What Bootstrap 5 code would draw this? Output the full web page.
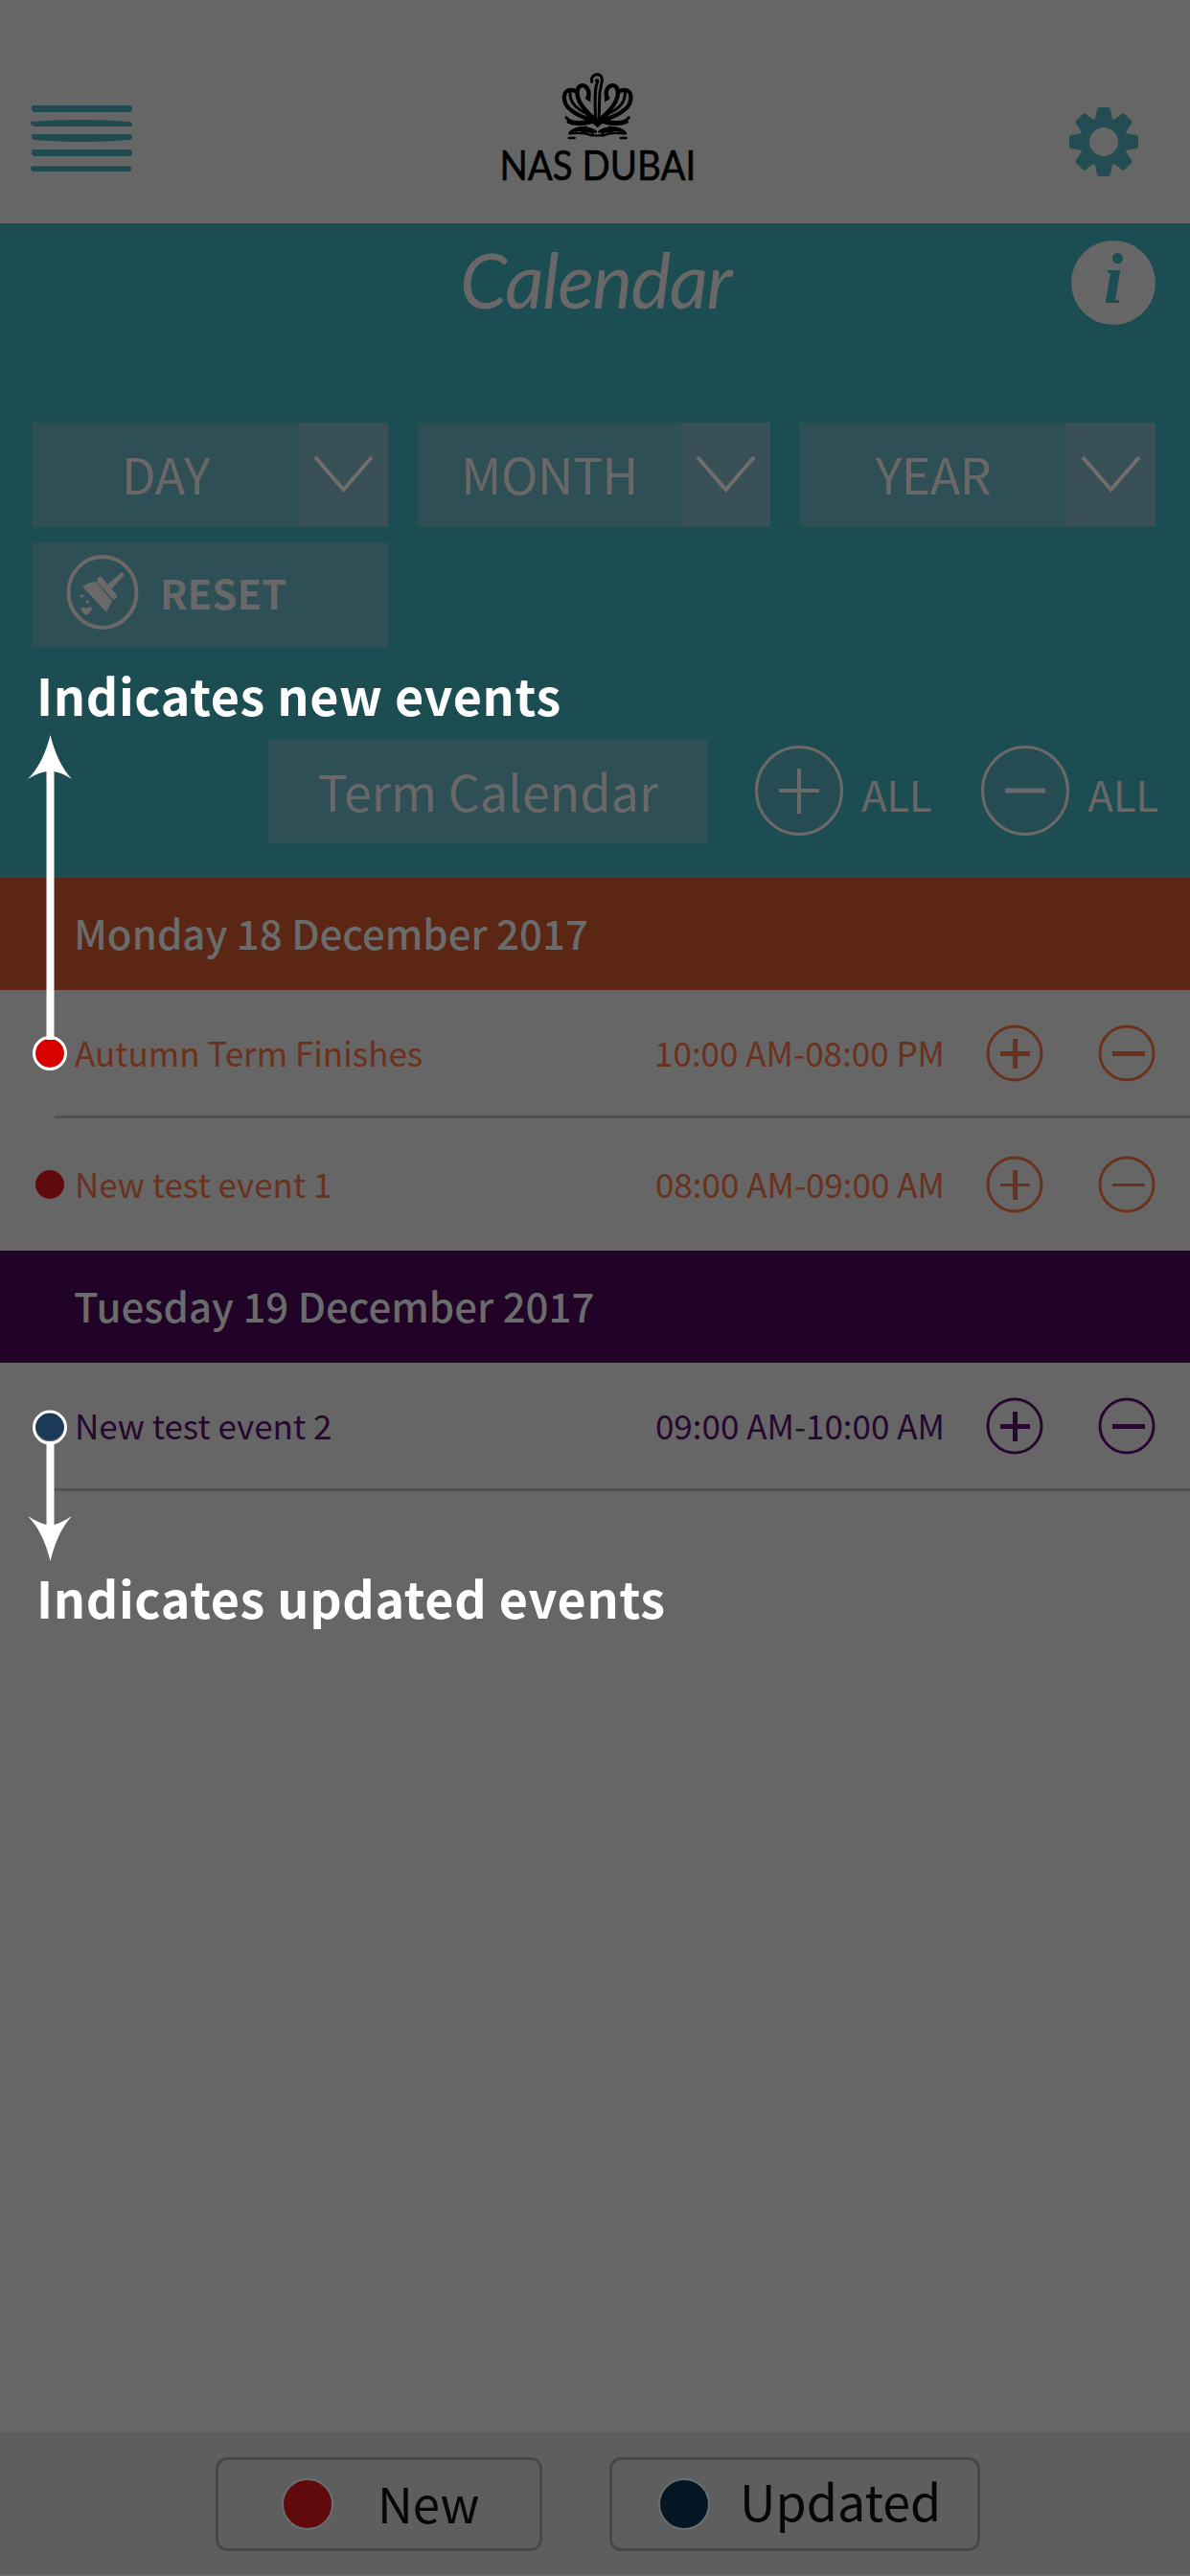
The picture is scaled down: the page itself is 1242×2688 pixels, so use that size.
<!DOCTYPE html>
<html lang="en">
<head>
<meta charset="utf-8">
<meta name="viewport" content="width=device-width, initial-scale=1">
<title>NAS Dubai – Calendar</title>
<link href="https://cdn.jsdelivr.net/npm/bootstrap@5.3.0/dist/css/bootstrap.min.css" rel="stylesheet">
<style>
  :root { --dim:#666; --teal:#1c4d52; --panel:#2d4f55; --ink:#696767; --orange:#5c2615; --purple:#210328; }
  body { font-family:"Noto Sans CJK SC","Noto Sans",sans-serif; background:var(--dim); color:var(--ink); line-height:1; }
  svg { display:block; flex:none; }
  .screen { width:1242px; height:2688px; overflow:hidden; }
  .topbar { height:233px; padding:0 54px 0 31px; }
  .brand-name { font-family:Lato,sans-serif; font-size:42px; line-height:42px; color:#000; transform:scaleX(.915); margin-top:5px; white-space:nowrap; -webkit-text-stroke:.6px #000; }
  .brand-box { width:199px; margin-right:8px; padding-top:76px; }
  .filters { height:683px; background:var(--teal); padding:0 36px 0 34px; }
  .title-row { height:208px; }
  .page-title { font-family:Lato,sans-serif; font-style:italic; font-weight:400; font-size:79px; line-height:96px; letter-spacing:-1.6px; width:290px; margin:11px 0 0 446px; color:var(--ink); }
  .info-btn { width:88px; height:88px; margin-top:18px; background:var(--dim); color:var(--teal); font:italic bold 74px/80px "Liberation Serif",serif; }
  .picker { height:109px; background:var(--panel); font-size:52px; letter-spacing:-.6px; }
  .picker-label { padding-bottom:4px; white-space:nowrap; }
  .picker-arrow { width:93px; background:#395156; padding:34px 0 0 15px; }
  .reset { width:371px; height:109px; margin-top:16px; padding-left:35px; gap:22px; background:var(--panel); font-size:42px; font-weight:700; letter-spacing:-.1px; }
  .reset span { padding-bottom:6px; }
  .term-row { margin-top:96px; padding-left:246px; height:109px; margin-right:-36px; }
  .term { width:459px; height:109px; flex:none; background:var(--panel); font-size:52px; padding-bottom:2px; }
  .all-btn { font-size:44px; gap:19px; letter-spacing:-.4px; margin-bottom:1px; }
  .all-btn span { padding-top:5px; }
  .day-head { height:117px; padding-left:77px; font-size:42px; font-weight:500; color:#6a6b6b; }
  .day-head span { padding-bottom:4px; }
  .event { margin-left:57px; height:134px; padding-right:36px; font-size:35px; border-bottom:3px solid #525252; }
  .event.last-one { height:138px; border:0; }
  .event-name { margin-left:11px; padding-bottom:3px; }
  .event-time { padding-bottom:3px; margin-right:43px; }
  .minus-gap { margin-left:57px; }
  .mark-dot { width:30px; height:30px; margin-left:-20px; flex:none; }
  .orange-bg { background:var(--orange); } .orange-tx { color:#6a311c; }
  .purple-bg { background:var(--purple); } .purple-tx { color:#270730; }
  .legend-bar { height:151px; background:#5e5e5e; border-bottom:2px solid #6a6a6a; color:#060606; padding:27px 0 0 225px; gap:70px; }
  .legend-btn { height:98px; border:3px solid #484848; border-radius:12px; }
  .legend-dot { width:54px; height:54px; border:2px solid #687072; flex:none; }
  .tip-text { position:absolute; color:#fff; font-size:52px; font-weight:700; letter-spacing:.64px; white-space:nowrap; }
  .tip-new { left:38px; top:699px; } .tip-upd { left:38px; top:1641px; }
  .tip-arrow { position:absolute; left:20px; }
</style>
</head>
<body>
<div class="screen position-relative d-flex flex-column">
  <header class="topbar d-flex justify-content-between">
    <svg width="108" height="72" viewBox="0 0 108 72" style="margin-top:109px" fill="#1f4b50">
      <path d="M3 1H104Q107 1 107 4.500Q107 8 104 8H4Q0 4 3 1Z"/>
      <path d="M1 18Q25 16 54 16T104 18Q107 18 107 21Q107 23 104 23H5Q0 21 1 18Z"/>
      <path d="M3 31H104Q107 31 107 34Q107 37 104 37Q80 39 54 39T4 37Q0 34 3 31Z"/>
      <path d="M3 47H104Q107 47 107 50Q107 54 104 54H4Q0 50 3 47Z"/>
      <path d="M2 64.500H105Q107 67 105 70H3Q0 67 2 64.500Z"/>
    </svg>
    <div class="brand-box d-flex flex-column align-items-center">
      <svg width="75" height="70" viewBox="225 20 225 210" fill="none" stroke="#000" stroke-linecap="round" stroke-linejoin="round">
        <path stroke-width="9" d="M320 48C314 20 354 16 352 44C350 62 344 70 344 100L342 180M334 44Q342 40 336 54C328 70 330 110 332 180"/>
        <path stroke-width="13" d="M308 100C318 64 290 50 278 66C262 100 300 140 330 166M368 100C356 64 386 50 398 66C414 100 376 140 346 166"/>
        <path stroke-width="13" d="M266 76C240 68 230 84 235 106C238 138 290 160 330 170M410 76C436 68 446 84 441 106C438 138 386 160 346 170"/>
        <path stroke-width="9" d="M252 82C250 120 285 140 310 150M424 82C426 120 391 140 366 150M240 160C256 182 300 176 332 164M436 160C420 182 376 176 344 164"/>
        <path stroke-width="9" d="M246 174C270 186 312 180 334 170M430 174C406 186 364 180 342 170M252 208C270 190 300 186 332 204M424 208C406 190 376 186 344 204"/>
        <path stroke-width="7" d="M268 202Q300 192 324 210M408 202Q376 192 352 210M250 210Q296 206 318 216H358Q380 206 426 210M248 224H266M410 224H428"/>
        <path fill="#000" stroke="none" d="M300 148L338 162L376 148L360 172L338 192L316 172ZM298 98L316 84V112ZM378 98L360 84V112ZM268 200L300 186L330 206L300 208ZM408 200L376 186L346 206L376 208Z"/>
      </svg>
      <div class="brand-name">NAS DUBAI</div>
    </div>
    <svg width="72" height="72" viewBox="-36 -36 72 72" style="margin-top:112px" fill="#234d53">
      <defs><path id="tooth" d="M-10.500 -21C-8 -25 -8 -29 -7 -34Q-6.500 -36 -4.500 -36H4.500Q6.500 -36 7 -34C8 -29 8 -25 10.500 -21Z"/></defs>
      <path fill-rule="evenodd" d="M-25 0a25 25 0 1 0 50 0a25 25 0 1 0 -50 0ZM-15 0a15 15 0 1 0 30 0a15 15 0 1 0 -30 0Z"/>
      <use href="#tooth"/><use href="#tooth" transform="rotate(45)"/><use href="#tooth" transform="rotate(90)"/><use href="#tooth" transform="rotate(135)"/><use href="#tooth" transform="rotate(180)"/><use href="#tooth" transform="rotate(225)"/><use href="#tooth" transform="rotate(270)"/><use href="#tooth" transform="rotate(315)"/>
    </svg>
  </header>

  <section class="filters">
    <div class="title-row d-flex justify-content-between align-items-start">
      <h1 class="page-title">Calendar</h1>
      <div class="info-btn rounded-circle text-center">i</div>
    </div>
    <div class="d-flex justify-content-between">
      <div class="picker d-flex" style="width:371px"><div class="picker-label flex-fill d-flex align-items-center justify-content-center">DAY</div>
        <div class="picker-arrow"><svg width="63" height="42" viewBox="0 0 63 42" fill="none" stroke="#706d6c" stroke-width="4"><path d="M2 2L31.500 36L61 2"/></svg></div></div>
      <div class="picker d-flex" style="width:368px"><div class="picker-label flex-fill d-flex align-items-center justify-content-center">MONTH</div>
        <div class="picker-arrow"><svg width="63" height="42" viewBox="0 0 63 42" fill="none" stroke="#706d6c" stroke-width="4"><path d="M2 2L31.500 36L61 2"/></svg></div></div>
      <div class="picker d-flex" style="width:371px"><div class="picker-label flex-fill d-flex align-items-center justify-content-center">YEAR</div>
        <div class="picker-arrow"><svg width="63" height="42" viewBox="0 0 63 42" fill="none" stroke="#706d6c" stroke-width="4"><path d="M2 2L31.500 36L61 2"/></svg></div></div>
    </div>
    <div class="reset d-flex align-items-center">
      <svg width="76" height="78" viewBox="0 0 76 78" style="margin-top:-5px" fill="#6b6968">
        <ellipse cx="38" cy="39" rx="35.500" ry="37" fill="none" stroke="#6b6968" stroke-width="4"/>
        <path d="M17 33Q25 28 31 28L48 48L42 60Z"/><path d="M33 24L36 22L53 42L53 45L49 47L32 28Z"/><path d="M43 31L58 18L61 21L47 36Z"/>
        <path d="M16 41l3 2l-2 2l-3-2ZM21 47l3 1v3l-3-1ZM15 56q3-3 6 0q3-3 6-1q0 4-6 8q-5-3-6-7Z"/>
      </svg>
      <span>RESET</span>
    </div>
    <div class="term-row d-flex align-items-center">
      <div class="term d-flex align-items-center justify-content-center">Term Calendar</div>
      <div class="all-btn d-flex align-items-center" style="margin-left:49px">
        <svg width="92" height="94" viewBox="0 0 92 94" fill="#254c53" stroke="#6b6968" stroke-width="3"><ellipse cx="46" cy="47" rx="44.500" ry="45.500"/><path stroke-width="4" d="M25 47H67M46 24V71"/></svg><span>ALL</span>
      </div>
      <div class="all-btn d-flex align-items-center" style="margin-left:52px">
        <svg width="92" height="94" viewBox="0 0 92 94" fill="#254c53" stroke="#6b6968" stroke-width="3"><ellipse cx="46" cy="47" rx="44.500" ry="45.500"/><path stroke-width="5" d="M25 47H67"/></svg><span>ALL</span>
      </div>
    </div>
  </section>

  <main class="flex-grow-1">
    <div class="day-head orange-bg d-flex align-items-center"><span>Monday 18 December 2017</span></div>
    <div class="event orange-tx d-flex align-items-center">
      <span class="mark-dot rounded-circle" style="background:#db0000"></span><span class="event-name">Autumn Term Finishes</span><span class="event-time ms-auto">10:00 AM-08:00 PM</span>
      <svg width="60" height="60" viewBox="0 0 60 60" fill="none" stroke="currentColor" stroke-width="3"><circle cx="30" cy="30" r="28"/><path stroke-width="5" d="M15 30.500H46M30.500 15V46"/></svg>
      <svg class="minus-gap" width="60" height="60" viewBox="0 0 60 60" fill="none" stroke="currentColor" stroke-width="3"><circle cx="30" cy="30" r="28"/><path stroke-width="5" d="M15 30.500H49"/></svg>
    </div>
    <div class="event last-one orange-tx d-flex align-items-center">
      <span class="mark-dot rounded-circle" style="background:#600a0c"></span><span class="event-name">New test event 1</span><span class="event-time ms-auto">08:00 AM-09:00 AM</span>
      <svg width="60" height="60" viewBox="0 0 60 60" fill="none" stroke="currentColor" stroke-width="3"><circle cx="30" cy="30" r="28"/><path d="M15 30.500H46"/><path stroke-width="5" d="M30.500 15V46"/></svg>
      <svg class="minus-gap" width="60" height="60" viewBox="0 0 60 60" fill="none" stroke="currentColor" stroke-width="3"><circle cx="30" cy="30" r="28"/><path d="M15 30.500H49"/></svg>
    </div>
    <div class="day-head purple-bg d-flex align-items-center"><span>Tuesday 19 December 2017</span></div>
    <div class="event purple-tx d-flex align-items-center">
      <span class="mark-dot rounded-circle" style="background:#1b3a58"></span><span class="event-name">New test event 2</span><span class="event-time ms-auto">09:00 AM-10:00 AM</span>
      <svg width="60" height="60" viewBox="0 0 60 60" fill="none" stroke="currentColor" stroke-width="3"><circle cx="30" cy="30" r="28"/><path stroke-width="5" d="M15 30.500H46M30.500 15V46"/></svg>
      <svg class="minus-gap" width="60" height="60" viewBox="0 0 60 60" fill="none" stroke="currentColor" stroke-width="3"><circle cx="30" cy="30" r="28"/><path stroke-width="5" d="M15 30.500H49"/></svg>
    </div>
  </main>

  <footer class="legend-bar d-flex align-items-start">
    <div class="legend-btn d-flex align-items-center" style="width:341px;padding-left:66px;gap:46px;font-size:51px"><span class="legend-dot rounded-circle" style="background:#600a0c"></span><span class="pb-1">New</span></div>
    <div class="legend-btn d-flex align-items-center" style="width:387px;padding-left:48px;gap:31px;font-size:52px"><span class="legend-dot rounded-circle" style="background:#041624"></span><span class="pb-2">Updated</span></div>
  </footer>

  <!-- help tips drawn over the dimmed calendar -->
  <div class="tip-text tip-new">Indicates new events</div>
  <svg class="tip-arrow" style="top:767px" width="64" height="354" viewBox="0 0 64 354"><path fill="#fff" d="M32.500 0Q40 30 55 46Q44 39 36.500 38V318H28.500V38Q20 39 9 46Q25 30 32.500 0Z"/><circle cx="32" cy="332" r="16.500" fill="none" stroke="#fff" stroke-width="3"/></svg>
  <svg class="tip-arrow" style="top:1470px" width="64" height="160" viewBox="0 0 64 160"><path fill="#fff" d="M32.500 159Q40 128 55 112Q44 119 36.500 121V34H28.500V121Q20 119 9 112Q25 128 32.500 159Z"/><circle cx="32" cy="19.500" r="16.500" fill="none" stroke="#fff" stroke-width="3"/></svg>
  <div class="tip-text tip-upd">Indicates updated events</div>
</div>
<script src="https://cdn.jsdelivr.net/npm/bootstrap@5.3.0/dist/js/bootstrap.bundle.min.js"></script>
</body>
</html>
